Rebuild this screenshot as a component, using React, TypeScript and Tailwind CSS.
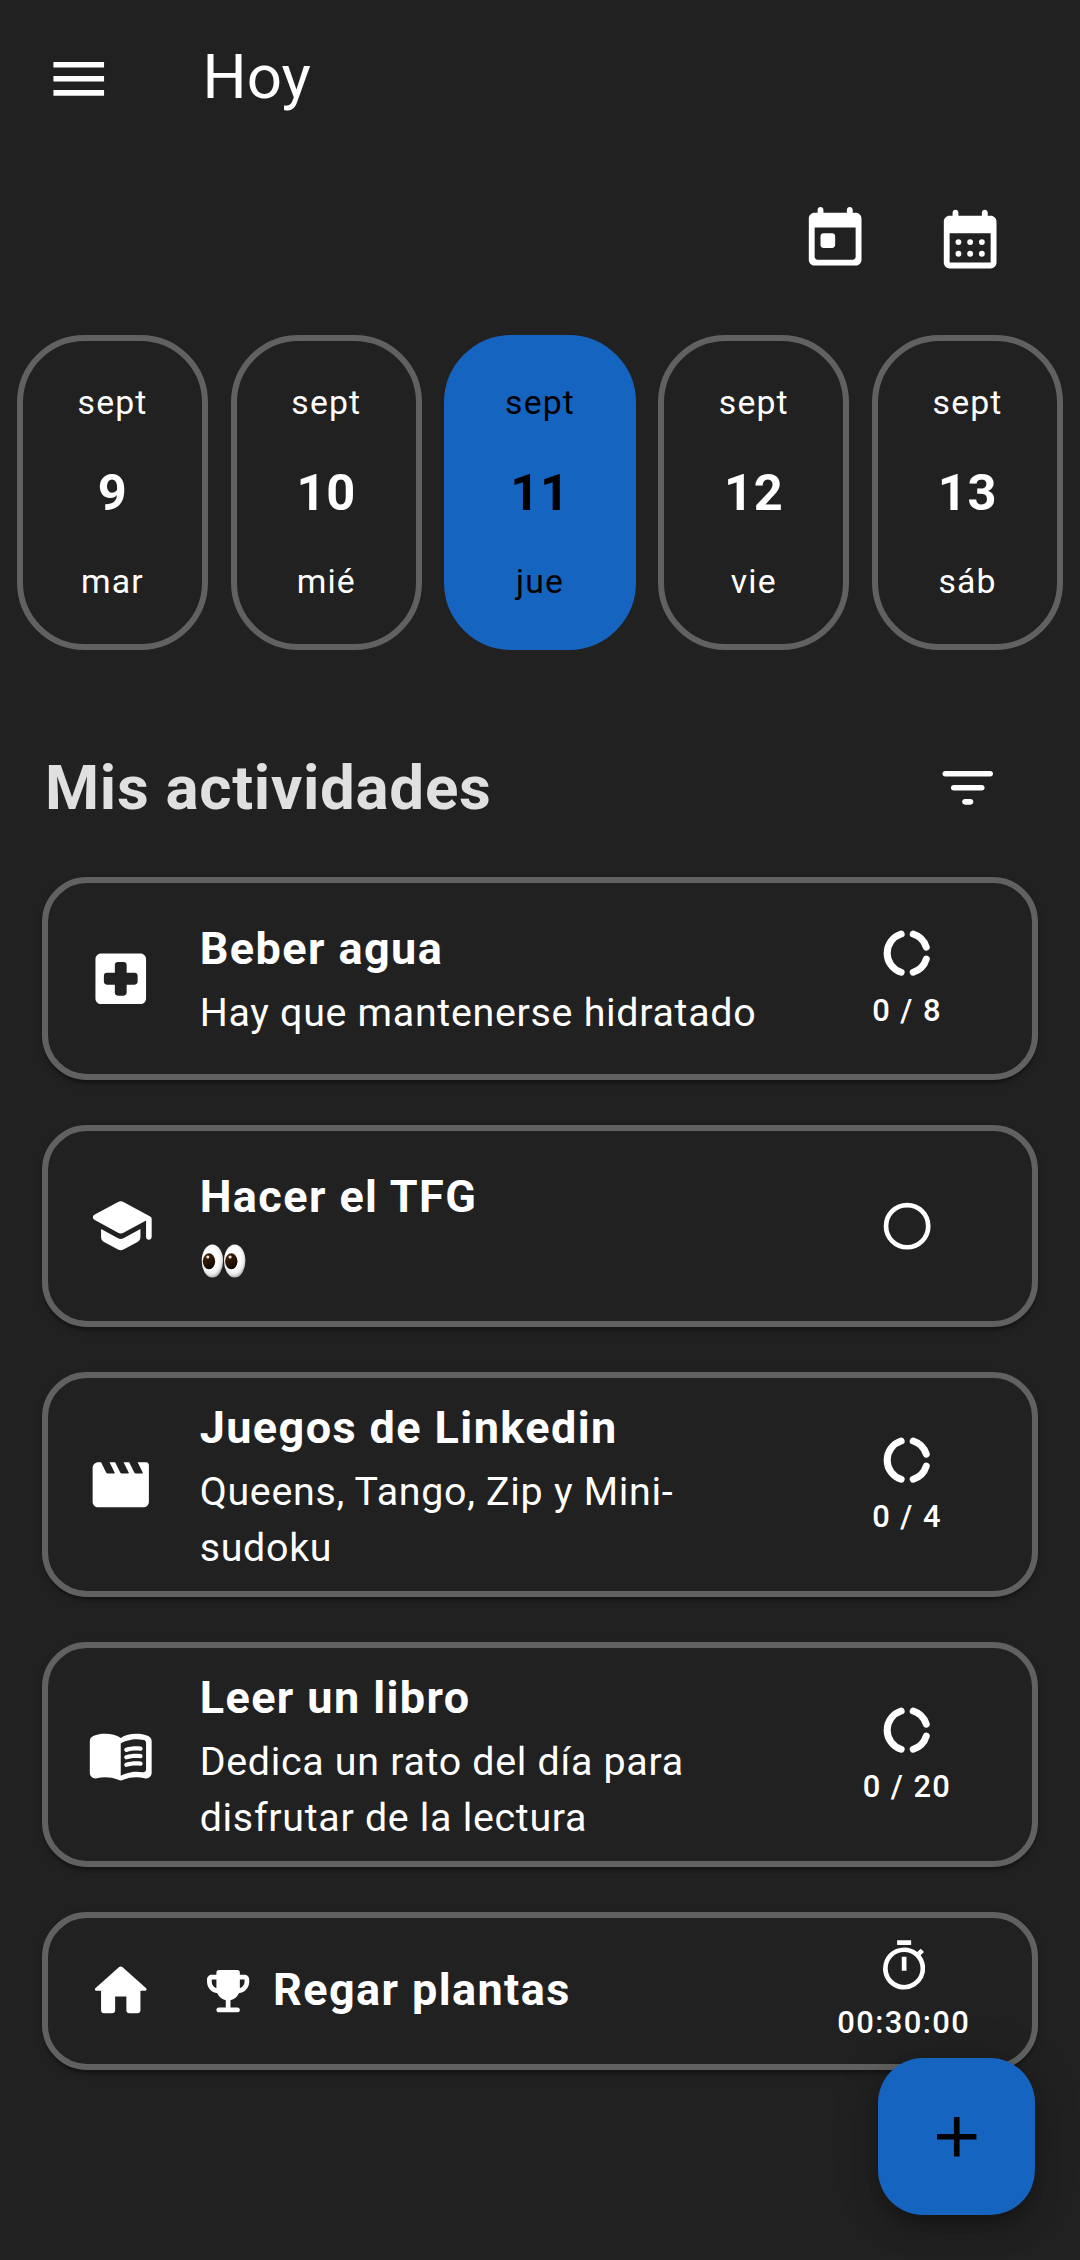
import type { ReactNode } from 'react';

type IconProps = { className?: string; children: ReactNode };

function Icon({ className = 'size-[67.5px]', children }: IconProps) {
  return (
    <svg viewBox="0 0 24 24" fill="currentColor" className={`block shrink-0 ${className}`} aria-hidden="true">
      {children}
    </svg>
  );
}

const MenuIcon = () => (
  <Icon>
    <path d="M3 18h18v-2H3v2zm0-5h18v-2H3v2zm0-7v2h18V6H3z" />
  </Icon>
);

const TodayIcon = () => (
  <Icon className="size-[70.3px]">
    <path d="M19 3h-1V2c0-.55-.45-1-1-1s-1 .45-1 1v1H8V2c0-.55-.45-1-1-1s-1 .45-1 1v1H5c-1.11 0-1.99.9-1.99 2L3 19c0 1.1.89 2 2 2h14c1.1 0 2-.9 2-2V5c0-1.1-.9-2-2-2zm0 15c0 .55-.45 1-1 1H6c-.55 0-1-.45-1-1V8h14v10zM8 10h3c.55 0 1 .45 1 1v3c0 .55-.45 1-1 1H8c-.55 0-1-.45-1-1v-3c0-.55.45-1 1-1z" />
  </Icon>
);

const MonthIcon = () => (
  <Icon className="size-[70.3px]">
    <path d="M19 4h-1V3c0-.55-.45-1-1-1s-1 .45-1 1v1H8V3c0-.55-.45-1-1-1s-1 .45-1 1v1H5c-1.11 0-1.99.9-1.99 2L3 20c0 1.1.89 2 2 2h14c1.1 0 2-.9 2-2V6c0-1.1-.9-2-2-2zm0 16H5V10h14v10z" />
    <circle cx="8" cy="13" r="1" />
    <circle cx="12" cy="13" r="1" />
    <circle cx="16" cy="13" r="1" />
    <circle cx="8" cy="17" r="1" />
    <circle cx="12" cy="17" r="1" />
    <circle cx="16" cy="17" r="1" />
  </Icon>
);

const FilterIcon = () => (
  <Icon>
    <path d="M11 18h2c.55 0 1-.45 1-1s-.45-1-1-1h-2c-.55 0-1 .45-1 1s.45 1 1 1zM3 7c0 .55.45 1 1 1h16c.55 0 1-.45 1-1s-.45-1-1-1H4c-.55 0-1 .45-1 1zm4 6h10c.55 0 1-.45 1-1s-.45-1-1-1H7c-.55 0-1 .45-1 1s.45 1 1 1z" />
  </Icon>
);

const HospitalIcon = () => (
  <Icon>
    <path
      fillRule="evenodd"
      d="M19 3H5c-1.1 0-1.99.9-1.99 2L3 19c0 1.1.9 2 2 2h14c1.1 0 2-.9 2-2V5c0-1.1-.9-2-2-2zm-2 11.1h-2.9V17c0 .55-.45 1-1 1h-2.2c-.55 0-1-.45-1-1v-2.9H7c-.55 0-1-.45-1-1v-2.2c0-.55.45-1 1-1h2.9V7c0-.55.45-1 1-1h2.2c.55 0 1 .45 1 1v2.9H17c.55 0 1 .45 1 1v2.2c0 .55-.45 1-1 1z"
    />
  </Icon>
);

const SchoolIcon = () => (
  <Icon>
    <path d="M5 13.18v2.81c0 .73.4 1.41 1.04 1.76l5 2.73c.6.33 1.32.33 1.92 0l5-2.73c.64-.35 1.04-1.03 1.04-1.76v-2.81l-6.04 3.3c-.6.33-1.32.33-1.92 0L5 13.18zm6.04-9.66L2.61 8.12c-.69.38-.69 1.38 0 1.76l8.43 4.6c.6.33 1.32.33 1.92 0L21 10.09V16c0 .55.45 1 1 1s1-.45 1-1V9.59c0-.37-.2-.7-.52-.88l-9.52-5.19c-.6-.32-1.32-.32-1.92 0z" />
  </Icon>
);

const MovieIcon = () => (
  <Icon>
    <path d="M18 4l1.82 3.64c.08.16-.04.36-.22.36h-1.98c-.38 0-.73-.21-.89-.55L15 4h-2l1.82 3.64c.08.16-.04.36-.22.36h-1.98c-.38 0-.73-.21-.89-.55L10 4H8l1.82 3.64c.08.16-.04.36-.22.36H7.62c-.38 0-.73-.21-.9-.55L5 4H4c-1.1 0-2 .9-2 2v12c0 1.1.9 2 2 2h16c1.1 0 2-.9 2-2V5c0-.55-.45-1-1-1h-3z" />
  </Icon>
);

const BookIcon = () => (
  <Icon>
    <path
      fillRule="evenodd"
      d="M17.5 4.5c-1.95 0-4.05.4-5.5 1.5-1.45-1.1-3.55-1.5-5.5-1.5-1.45 0-2.99.22-4.28.79C1.49 5.62 1 6.33 1 7.14v11.28c0 1.3 1.22 2.26 2.48 1.94.98-.25 2.02-.36 3.02-.36 1.56 0 3.22.26 4.56.92.6.3 1.28.3 1.87 0 1.34-.67 3-.92 4.56-.92 1 0 2.04.11 3.02.36 1.26.33 2.48-.63 2.48-1.94V7.14c0-.81-.49-1.52-1.22-1.85-1.28-.57-2.82-.79-4.27-.79zM21 17.23c0 .63-.58 1.09-1.2.98-.75-.14-1.53-.2-2.3-.2-1.7 0-4.15.65-5.5 1.5V8c1.35-.85 3.8-1.5 5.5-1.5.92 0 1.83.09 2.7.28.46.1.8.51.8.98v9.47z"
    />
    <path d="M13.98 11.01c-.32 0-.61-.2-.71-.52-.13-.39.09-.82.48-.94 1.54-.5 3.53-.66 5.36-.45.41.05.71.42.66.83-.05.41-.42.71-.83.66-1.62-.19-3.39-.04-4.73.39-.08.01-.16.03-.23.03z" />
    <path d="M13.98 13.67c-.32 0-.61-.2-.71-.52-.13-.39.09-.82.48-.94 1.54-.5 3.53-.66 5.36-.45.41.05.71.42.66.83-.05.41-.42.71-.83.66-1.62-.19-3.39-.04-4.73.39-.08.02-.16.03-.23.03z" />
    <path d="M13.98 16.33c-.32 0-.61-.2-.71-.52-.13-.39.09-.82.48-.94 1.54-.5 3.53-.66 5.36-.45.41.05.71.42.66.83-.05.41-.42.7-.83.66-1.62-.19-3.39-.04-4.73.39-.08.02-.16.03-.23.03z" />
  </Icon>
);

const HomeIcon = () => (
  <Icon>
    <path d="M10 19v-5h4v5c0 .55.45 1 1 1h3c.55 0 1-.45 1-1v-7h1.7c.46 0 .68-.57.33-.87L12.67 3.6c-.38-.34-.96-.34-1.34 0l-8.36 7.53c-.34.3-.13.87.33.87H5v7c0 .55.45 1 1 1h3c.55 0 1-.45 1-1z" />
  </Icon>
);

const TrophyIcon = () => (
  <Icon className="mt-[1.6px] size-[56.25px]">
    <path d="M19 5h-2V4c0-.55-.45-1-1-1H8c-.55 0-1 .45-1 1v1H5c-1.1 0-2 .9-2 2v1c0 2.55 1.92 4.63 4.39 4.94.63 1.5 1.98 2.63 3.61 2.96V19H8c-.55 0-1 .45-1 1s.45 1 1 1h8c.55 0 1-.45 1-1s-.45-1-1-1h-3v-3.1c1.63-.33 2.98-1.46 3.61-2.96C19.08 12.63 21 10.55 21 8V7c0-1.1-.9-2-2-2zM5 8V7h2v3.82C5.84 10.4 5 9.3 5 8zm14 0c0 1.3-.84 2.4-2 2.82V7h2v1z" />
  </Icon>
);

const ProgressIcon = () => (
  <Icon className="size-[56.25px]">
    <g fill="none" stroke="currentColor" strokeWidth="3" strokeLinecap="round">
      <path d="M9.45 3.85A8.55 8.55 0 0 0 9.45 20.15" />
      <path d="M14.6 3.85A8.55 8.55 0 0 1 20.15 9.4" />
      <path d="M20.15 14.6A8.55 8.55 0 0 1 14.6 20.15" />
    </g>
  </Icon>
);

const CircleIcon = () => (
  <Icon className="size-[56.25px]">
    <circle cx="12" cy="12" r="9" fill="none" stroke="currentColor" strokeWidth="2" />
  </Icon>
);

const TimerIcon = () => (
  <Icon className="size-[56.25px]">
    <path d="M15 1H9v2h6V1zm-4 13h2V8h-2v6zm8.03-6.61l1.42-1.42c-.43-.51-.9-.99-1.41-1.41l-1.42 1.42A8.962 8.962 0 0 0 12 4a9 9 0 0 0-9 9c0 4.97 4.02 9 9 9a8.994 8.994 0 0 0 7.03-14.61zM12 20c-3.87 0-7-3.13-7-7s3.13-7 7-7 7 3.13 7 7-3.13 7-7 7z" />
  </Icon>
);

const PlusIcon = () => (
  <Icon>
    <path d="M19 13h-6v6h-2v-6H5v-2h6V5h2v6h6v2z" />
  </Icon>
);

function Eyes() {
  return (
    <svg viewBox="0 0 46 34" className="ml-px block h-[34px] w-[46px]" role="img" aria-label="👀">
      <defs>
        <radialGradient id="eyeball" cx="0.45" cy="0.42" r="0.58">
          <stop offset="0.55" stopColor="#ffffff" />
          <stop offset="0.82" stopColor="#ececec" />
          <stop offset="1" stopColor="#b4b4b4" />
        </radialGradient>
        <linearGradient id="iris" x1="0.2" y1="0" x2="0.8" y2="1">
          <stop offset="0" stopColor="#3f2106" />
          <stop offset="0.5" stopColor="#2a1504" />
          <stop offset="1" stopColor="#080300" />
        </linearGradient>
      </defs>
      {[0, 22.3].map((x) => (
        <g key={x} transform={`translate(${x} 0)`}>
          <ellipse cx="11.4" cy="17" rx="10.7" ry="16.5" fill="url(#eyeball)" />
          <ellipse cx="8" cy="17.3" rx="6.2" ry="8" fill="url(#iris)" />
          <circle cx="6.8" cy="13" r="1.6" fill="#e8e0da" />
        </g>
      ))}
    </svg>
  );
}

type Day = { month: string; day: number; weekday: string; selected?: boolean };

const days: Day[] = [
  { month: 'sept', day: 9, weekday: 'mar' },
  { month: 'sept', day: 10, weekday: 'mié' },
  { month: 'sept', day: 11, weekday: 'jue', selected: true },
  { month: 'sept', day: 12, weekday: 'vie' },
  { month: 'sept', day: 13, weekday: 'sáb' },
];

function DayPill({ month, day, weekday, selected }: Day) {
  return (
    <button
      className={`flex h-[315px] w-[191.25px] shrink-0 flex-col items-center justify-between rounded-[67.5px] border-[6px] py-[39.5px] text-[33.75px] leading-[45px] tracking-[1.125px] ${
        selected ? 'border-[#1565c0] bg-[#1565c0] text-black' : 'border-[#616161] text-white'
      }`}
    >
      <span>{month}</span>
      <span className="text-[50.625px] leading-[59px] font-bold tracking-[0.703px]">{day}</span>
      <span>{weekday}</span>
    </button>
  );
}

type Activity = {
  icon: ReactNode;
  title: string;
  badge?: ReactNode;
  description?: ReactNode;
  status: ReactNode;
  label?: string;
  height: string;
};

const activities: Activity[] = [
  {
    icon: <HospitalIcon />,
    title: 'Beber agua',
    description: 'Hay que mantenerse hidratado',
    status: <ProgressIcon />,
    label: '0 / 8',
    height: 'h-[202.5px]',
  },
  { icon: <SchoolIcon />, title: 'Hacer el TFG', description: <Eyes />, status: <CircleIcon />, height: 'h-[202.5px]' },
  {
    icon: <MovieIcon />,
    title: 'Juegos de Linkedin',
    description: 'Queens, Tango, Zip y Mini-sudoku',
    status: <ProgressIcon />,
    label: '0 / 4',
    height: 'h-[225px]',
  },
  {
    icon: <BookIcon />,
    title: 'Leer un libro',
    description: 'Dedica un rato del día para disfrutar de la lectura',
    status: <ProgressIcon />,
    label: '0 / 20',
    height: 'h-[225px]',
  },
  {
    icon: <HomeIcon />,
    title: 'Regar plantas',
    badge: <TrophyIcon />,
    status: <TimerIcon />,
    label: '00:30:00',
    height: 'h-[157.5px]',
  },
];

function ActivityCard({ icon, title, badge, description, status, label, height }: Activity) {
  return (
    <li
      className={`flex items-center rounded-[45px] border-[6px] border-[#616161] bg-[#212121] pr-[61.5px] pl-[39px] shadow-[0_6px_3px_-3px_rgba(0,0,0,0.2),0_3px_3px_rgba(0,0,0,0.14),0_3px_8px_rgba(0,0,0,0.12)] ${height}`}
    >
      {icon}
      <div className="ml-[45px] min-w-0 flex-1">
        <div className={`-mt-[0.37px] flex items-center gap-[17px] ${badge ? 'pb-[1.7px]' : ''}`}>
          {badge}
          <h3 className="text-[45px] leading-[67.5px] font-bold tracking-[1.406px]">{title}</h3>
        </div>
        {description && (
          <div className="mt-[2.47px] flex min-h-[56.25px] items-center text-[39.375px] leading-[56.25px] tracking-[0.703px]">
            {description}
          </div>
        )}
      </div>
      <div className="ml-[45px] flex min-w-[126.5px] flex-col items-center gap-[5.625px]">
        {status}
        {label && (
          <span className="mt-[0.4px] -mb-[0.4px] text-[30.9375px] leading-[45px] font-medium tracking-[1.406px]">
            {label}
          </span>
        )}
      </div>
    </li>
  );
}

export default function App() {
  return (
    <div className="relative h-[2260px] w-[1080px] overflow-hidden bg-[#212121] font-[Roboto,sans-serif] text-white">
      <header className="flex h-[157.5px] items-center pl-[45px]">
        <button aria-label="Menú">
          <MenuIcon />
        </button>
        <h1 className="ml-[90px] pb-[3px] text-[61.875px] leading-[78.75px]">Hoy</h1>
      </header>

      <div className="mt-[14px] flex h-[135px] justify-end pr-[42.2px]">
        <button className="flex size-[135px] items-center justify-center" aria-label="Ir a hoy">
          <TodayIcon />
        </button>
        <button className="flex size-[135px] items-center justify-center" aria-label="Abrir calendario">
          <MonthIcon />
        </button>
      </div>

      <div className="mt-[28.2px] flex gap-[22.5px] pl-[16.875px]">
        {days.map((d) => (
          <DayPill key={d.day} {...d} />
        ))}
      </div>

      <div className="mt-[70.3px] flex h-[135px] items-center justify-between px-[45px]">
        <h2 className="pt-[2px] text-[61.875px] leading-[78.75px] font-bold tracking-[0.703px] text-[#e0e0e0]">
          Mis actividades
        </h2>
        <button className="flex size-[135px] items-center justify-center" aria-label="Filtrar">
          <FilterIcon />
        </button>
      </div>

      <ul className="mt-[22.5px] flex flex-col gap-[45px] px-[42.2px]">
        {activities.map((a) => (
          <ActivityCard key={a.title} {...a} />
        ))}
      </ul>

      <button
        className="absolute right-[45px] bottom-[45px] flex size-[157.5px] items-center justify-center rounded-[45px] bg-[#1565c0] text-black shadow-[0_8px_14px_-3px_rgba(0,0,0,0.2),0_17px_28px_rgba(0,0,0,0.14),0_3px_50px_rgba(0,0,0,0.12)]"
        aria-label="Añadir actividad"
      >
        <PlusIcon />
      </button>
    </div>
  );
}
